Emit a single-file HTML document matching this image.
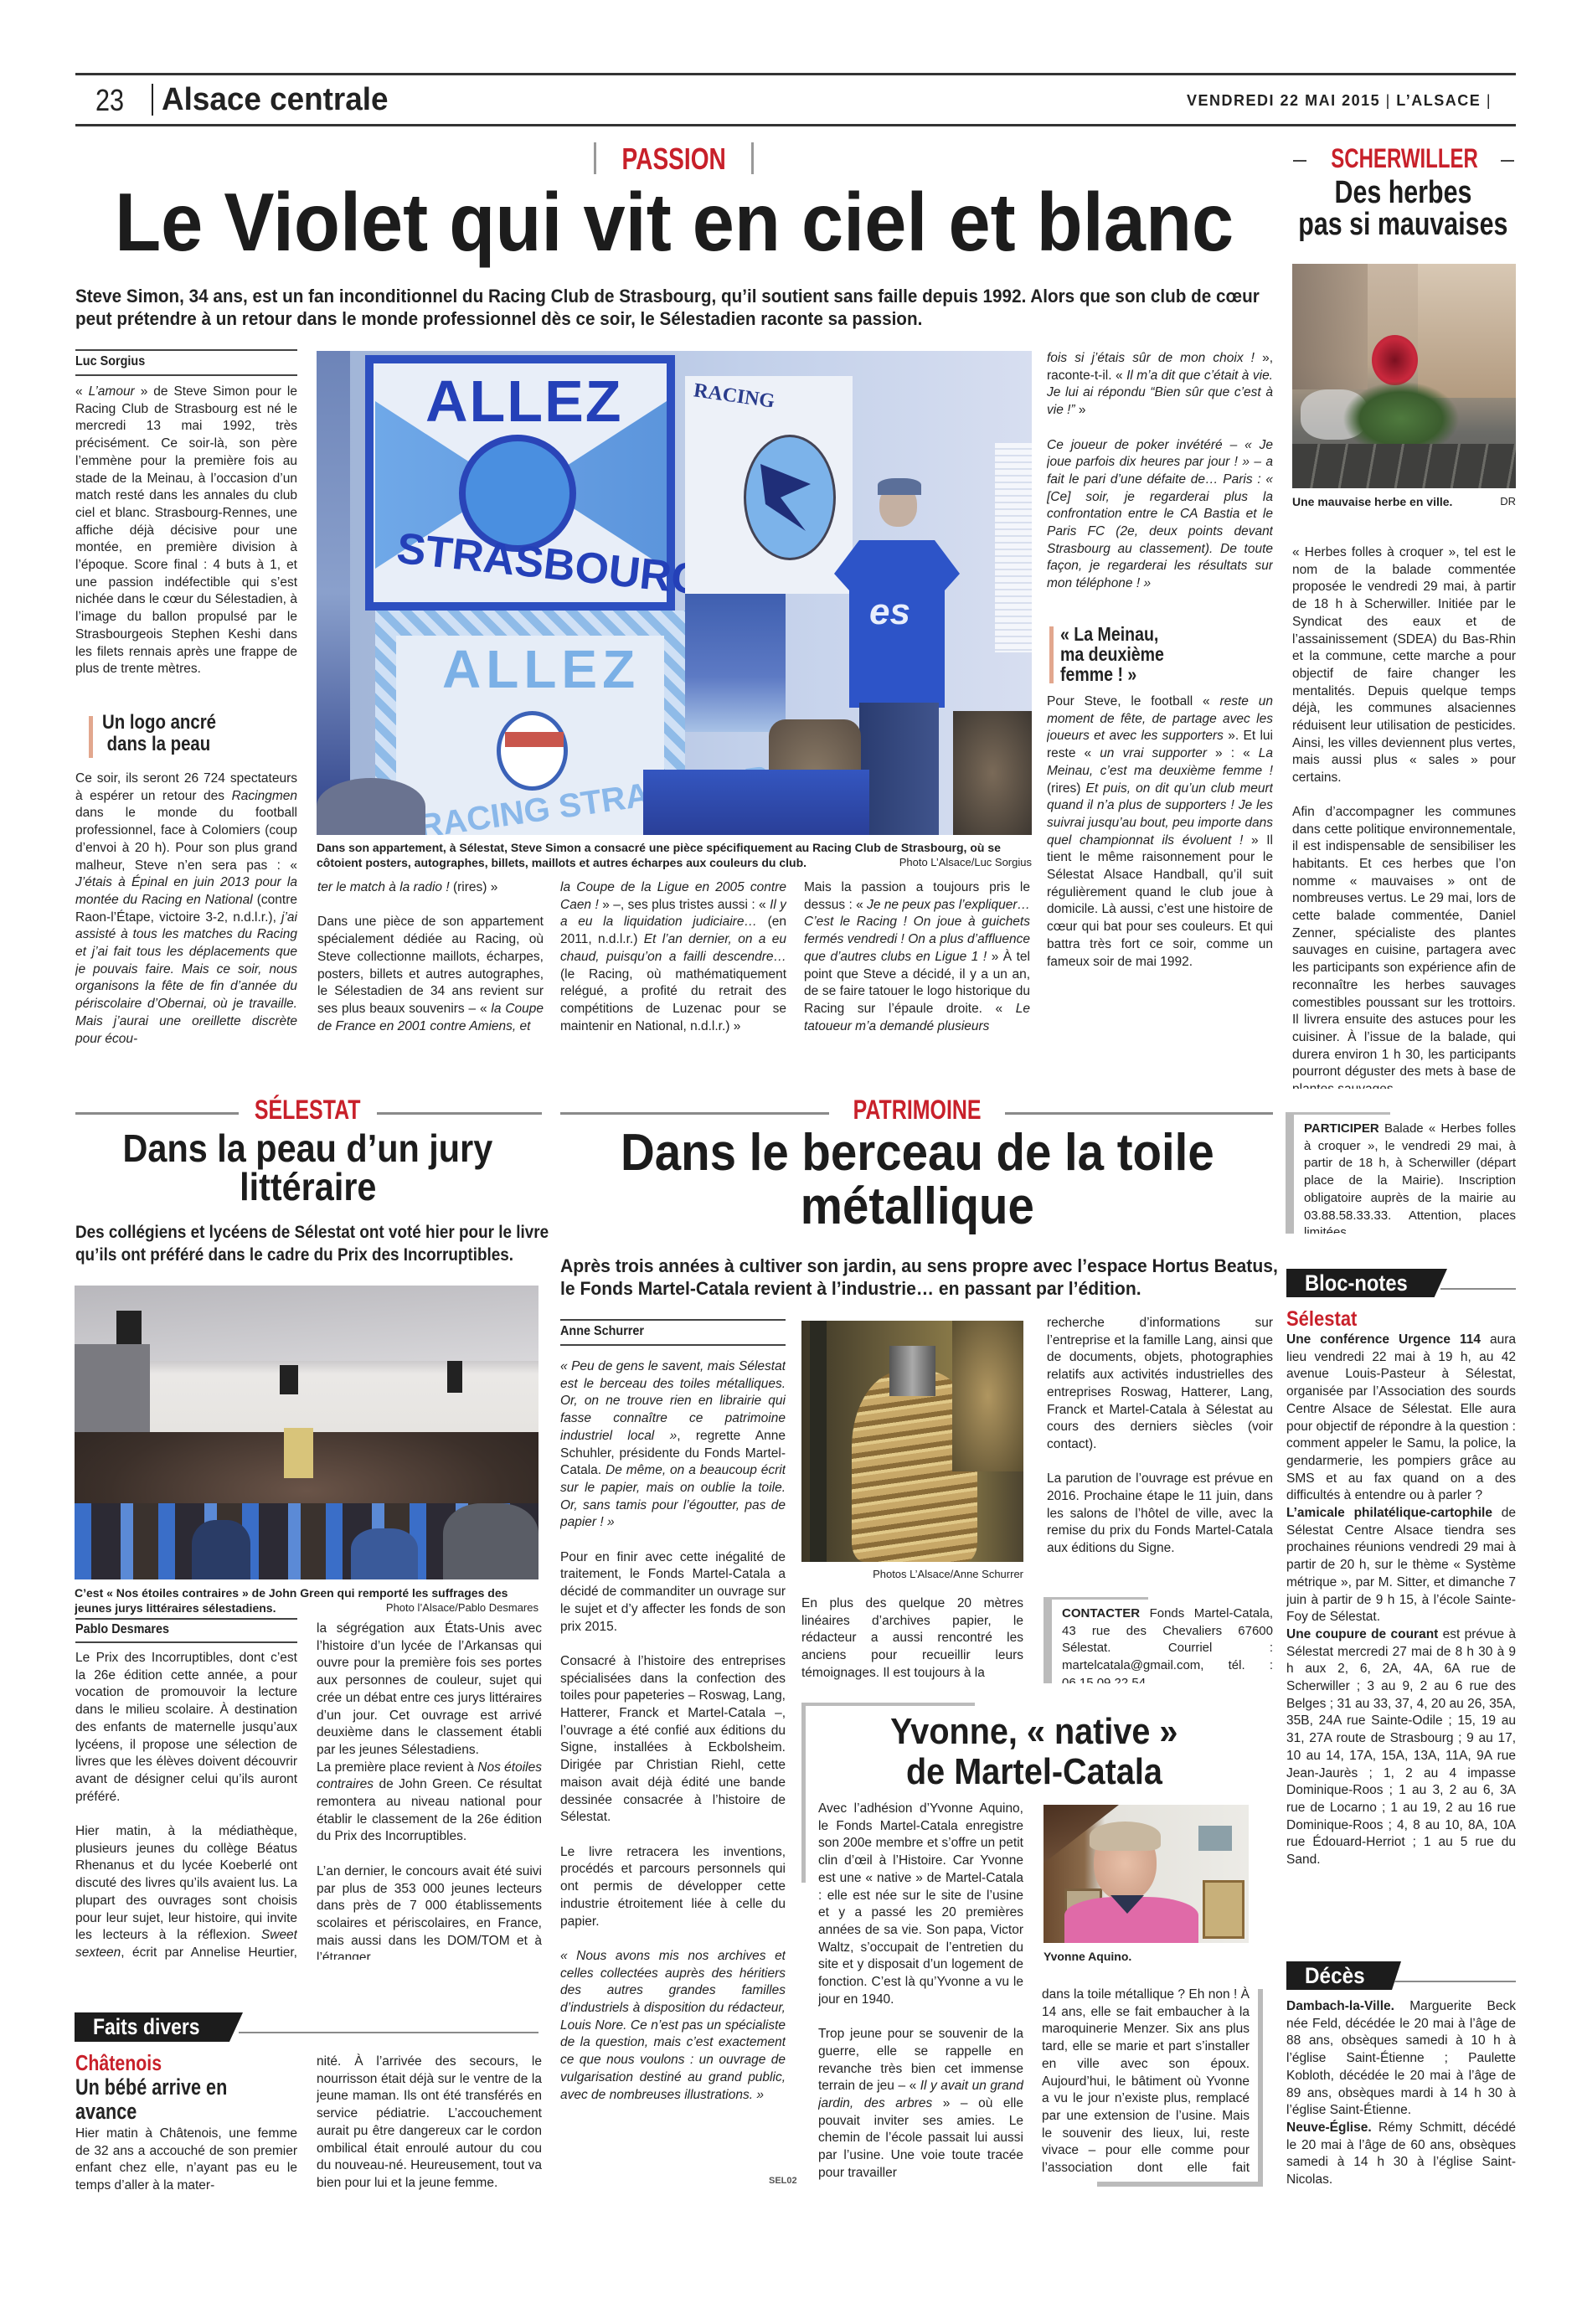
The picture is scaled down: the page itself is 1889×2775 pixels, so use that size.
<!DOCTYPE html>
<html lang="fr">
<head>
<meta charset="utf-8">
<style>
*{margin:0;padding:0;box-sizing:border-box}
body{width:1889px;height:2775px;background:#fff;position:relative;overflow:hidden;font-family:"Liberation Sans",sans-serif;color:#222}
.a{position:absolute}
.t{position:absolute;font:15.5px/20.7px "Liberation Sans",sans-serif;text-align:justify;hyphens:auto;overflow:hidden;color:#222}
.t p{margin-bottom:20px}
.t i{font-style:italic}
.h{position:absolute;white-space:nowrap;font-weight:bold;color:#1c1c1c;text-align:center}
.h span{display:inline-block;transform-origin:center}
.red{color:#c8202a}
.rule{position:absolute;background:#333}
.grule{position:absolute;background:#8a8a8a}
.cap{position:absolute;font:bold 14px/18px "Liberation Sans",sans-serif;overflow:hidden;color:#222}
.cred{font-weight:normal;float:right;font-size:13px}
.byl{position:absolute;border-top:2px solid #444;border-bottom:2px solid #444;font:bold 16px/26px "Liberation Sans",sans-serif;padding-left:0}
.box{position:absolute;border-left:10px solid #bbb;border-top:3px solid #bbb;padding:10px 0 0 12px;font:15px/20.7px "Liberation Sans",sans-serif;text-align:justify;overflow:hidden}
.blk{position:absolute;background:#1c1c1c;color:#fff;font:bold 27px/34px "Liberation Sans",sans-serif;padding-left:22px;clip-path:polygon(0 0,100% 0,92% 100%,0 100%)}
</style>
</head>
<body>

<!-- HEADER -->
<div class="rule" style="left:90px;top:87px;width:1720px;height:3px"></div>
<div class="rule" style="left:90px;top:148px;width:1720px;height:3px"></div>
<div class="a" style="left:114px;top:98px;font:36px/44px 'Liberation Sans',sans-serif;transform:scaleX(.85);transform-origin:left">23</div>
<div class="a" style="left:181px;top:100px;width:2px;height:38px;background:#222"></div>
<div class="a" style="left:193px;top:96px;font:bold 38px/46px 'Liberation Sans',sans-serif;transform:scaleX(.97);transform-origin:left;white-space:nowrap">Alsace centrale</div>
<div class="a" style="right:108px;top:108px;font:bold 18px/24px 'Liberation Sans',sans-serif;transform:scaleX(1);transform-origin:right;white-space:nowrap;letter-spacing:1.5px">VENDREDI 22 MAI 2015 <span style="font-weight:normal">|</span> L’ALSACE <span style="font-weight:normal">|</span></div>

<!-- PASSION -->
<div class="a" style="left:709px;top:170px;width:3px;height:38px;background:#999"></div>
<div class="a" style="left:897px;top:170px;width:3px;height:38px;background:#999"></div>
<div class="h red" style="left:712px;top:170px;width:185px;font-size:36px;line-height:40px"><span style="transform:scaleX(.78)">PASSION</span></div>
<div class="h" style="left:60px;top:205px;width:1490px;font-size:98px;line-height:120px"><span style="transform:scaleX(.92)">Le Violet qui vit en ciel et blanc</span></div>

<!-- SCHERWILLER -->
<div class="a" style="left:1544px;top:191px;width:16px;height:2px;background:#444"></div>
<div class="a" style="left:1792px;top:191px;width:16px;height:2px;background:#444"></div>
<div class="h red" style="left:1560px;top:172px;width:232px;font-size:32px;line-height:34px"><span style="transform:scaleX(.75)">SCHERWILLER</span></div>
<div class="h" style="left:1540px;top:210px;width:270px;font-size:38px;line-height:40px"><span style="transform:scaleX(.8)">Des herbes</span></div>
<div class="h" style="left:1510px;top:248px;width:330px;font-size:38px;line-height:40px"><span style="transform:scaleX(.8)">pas si mauvaises</span></div>

<!-- Lead -->
<div class="a" style="left:90px;top:340px;width:1600px;font:bold 22px/27px 'Liberation Sans',sans-serif;transform:scaleX(.94);transform-origin:left;white-space:nowrap">Steve Simon, 34 ans, est un fan inconditionnel du Racing Club de Strasbourg, qu’il soutient sans faille depuis 1992. Alors que son club de cœur<br>peut prétendre à un retour dans le monde professionnel dès ce soir, le Sélestadien raconte sa passion.</div>

<!-- Right top photo -->
<div class="a" style="left:1543px;top:315px;width:267px;height:268px;overflow:hidden;background:linear-gradient(180deg,#c9b7a4 0%,#b8a48c 45%,#8e8578 62%,#6c6c68 75%,#5a5a58 100%)">
  <div class="a" style="left:0;top:0;width:90px;height:150px;background:linear-gradient(90deg,#7d6e62,#a99683);opacity:.8"></div>
  <div class="a" style="left:150px;top:0;width:117px;height:160px;background:linear-gradient(180deg,#d8c8b4,#b39b80)"></div>
  <div class="a" style="left:10px;top:150px;width:80px;height:60px;border-radius:40%;background:#d9d9d9;opacity:.7"></div>
  <div class="a" style="left:95px;top:85px;width:55px;height:60px;border-radius:50%;background:radial-gradient(#7a1020,#c8283c 60%,#b02035)"></div>
  <div class="a" style="left:60px;top:140px;width:140px;height:90px;background:radial-gradient(ellipse,#4f7a3e 0%,#3b5c2e 50%,transparent 70%)"></div>
  <div class="a" style="left:0;top:215px;width:267px;height:53px;background:repeating-linear-gradient(100deg,#3f3f3d 0 30px,#6b6b66 30px 33px)"></div>
</div>
<div class="cap" style="left:1543px;top:590px;width:267px">Une mauvaise herbe en ville.<span class="cred">DR</span></div>

<div class="t" style="left:1543px;top:650px;width:267px;height:1280px;font-size:15.5px">
<p>« Herbes folles à croquer », tel est le nom de la balade commentée proposée le vendredi 29 mai, à partir de 18 h à Scherwiller. Initiée par le Syndicat des eaux et de l’assainissement (SDEA) du Bas-Rhin et la commune, cette marche a pour objectif de faire changer les mentalités. Depuis quelque temps déjà, les communes alsaciennes réduisent leur utilisation de pesticides. Ainsi, les villes deviennent plus vertes, mais aussi plus « sales » pour certains.</p>
<p>Afin d’accompagner les communes dans cette politique environnementale, il est indispensable de sensibiliser les habitants. Et ces herbes que l’on nomme « mauvaises » ont de nombreuses vertus. Le 29 mai, lors de cette balade commentée, Daniel Zenner, spécialiste des plantes sauvages en cuisine, partagera avec les participants son expérience afin de reconnaître les herbes sauvages comestibles poussant sur les trottoirs. Il livrera ensuite des astuces pour les cuisiner. À l’issue de la balade, qui durera environ 1 h 30, les participants pourront déguster des mets à base de plantes sauvages.</p>
</div>
<div class="a" style="left:1543px;top:1300px;width:267px;height:30px;background:#fff"></div>
<div class="box" style="left:1535px;top:1328px;width:275px;height:145px;border-top:none;background:linear-gradient(#bbb,#bbb) 0 0/115px 3px no-repeat"><b>PARTICIPER</b> Balade « Herbes folles à croquer », le vendredi 29 mai, à partir de 18 h, à Scherwiller (départ place de la Mairie). Inscription obligatoire auprès de la mairie au 03.88.58.33.33. Attention, places limitées.</div>

<!-- Byline Luc Sorgius -->
<div class="byl" style="left:90px;top:417px;width:265px;height:32px"><span style="display:inline-block;transform:scaleX(.9);transform-origin:left">Luc Sorgius</span></div>

<!-- Col 1 -->
<div class="t" style="left:90px;top:458px;width:265px;height:380px">
« <i>L’amour</i> » de Steve Simon pour le Racing Club de Strasbourg est né le mercredi 13 mai 1992, très précisément. Ce soir-là, son père l’emmène pour la première fois au stade de la Meinau, à l’occasion d’un match resté dans les annales du club ciel et blanc. Strasbourg-Rennes, une affiche déjà décisive pour une montée, en première division à l’époque. Score final : 4 buts à 1, et une passion indéfectible qui s’est nichée dans le cœur du Sélestadien, à l’image du ballon propulsé par le Strasbourgeois Stephen Keshi dans les filets rennais après une frappe de plus de trente mètres.
</div>
<div class="a" style="left:106px;top:855px;width:5px;height:50px;background:#e2a78e"></div>
<div class="a" style="left:122px;top:850px;font:bold 24px/26px 'Liberation Sans',sans-serif;transform:scaleX(.85);transform-origin:left;white-space:nowrap">Un logo ancré<br>&nbsp;dans la peau</div>
<div class="t" style="left:90px;top:920px;width:265px;height:335px">
Ce soir, ils seront 26 724 spectateurs à espérer un retour des <i>Racingmen</i> dans le monde du football professionnel, face à Colomiers (coup d’envoi à 20 h). Pour son plus grand malheur, Steve n’en sera pas : « <i>J’étais à Épinal en juin 2013 pour la montée du Racing en National</i> (contre Raon-l’Étape, victoire 3-2, n.d.l.r.), <i>j’ai assisté à tous les matches du Racing et j’ai fait tous les déplacements que je pouvais faire. Mais ce soir, nous organisons la fête de fin d’année du périscolaire d’Obernai, où je travaille. Mais j’aurai une oreillette discrète pour écou-</i>
</div>

<!-- Main photo -->
<div class="a" style="left:378px;top:419px;width:854px;height:578px;overflow:hidden;background:linear-gradient(90deg,#9fb3d6 0%,#c2d0ea 60%,#d7def0 100%)">
  <div class="a" style="left:0;top:0;width:40px;height:578px;background:linear-gradient(#6d84b8,#8aa0cc 50%,#2c3f88)"></div>
  <div class="a" style="left:58px;top:5px;width:370px;height:305px;background:#e8eef8;border:10px solid #2d4fc0"></div>
  <div class="a" style="left:70px;top:60px;width:348px;height:200px;background:linear-gradient(90deg,#6fa8e8,#5c95dc);clip-path:polygon(0 0,40% 45%,60% 45%,100% 0,100% 100%,60% 55%,40% 55%,0 100%)"></div>
  <div class="a" style="left:170px;top:100px;width:140px;height:140px;border-radius:50%;background:#4a8fe0;border:8px solid #2a45b8"></div>
  <div class="a" style="left:130px;top:25px;font:bold 70px/70px 'Liberation Sans',sans-serif;color:#2440b8;letter-spacing:2px">ALLEZ</div>
  <div class="a" style="left:95px;top:225px;font:bold 52px/60px 'Liberation Sans',sans-serif;color:#2440b8;transform:rotate(6deg)">STRASBOURG</div>
  <div class="a" style="left:440px;top:30px;width:200px;height:260px;background:#edf1f8"></div>
  <div class="a" style="left:450px;top:40px;font:bold 24px/28px 'Liberation Serif',serif;color:#2a3c8c;transform:rotate(8deg)">RACING</div>
  <div class="a" style="left:510px;top:100px;width:110px;height:150px;border-radius:50%;border:3px solid #445;background:#7cb3ea"></div>
  <div class="a" style="left:530px;top:135px;width:60px;height:80px;background:#1f2e78;clip-path:polygon(0 0,100% 30%,40% 50%,90% 100%,10% 60%)"></div>
  <div class="a" style="left:70px;top:310px;width:370px;height:268px;background:repeating-linear-gradient(45deg,#cfe0f5 0 10px,#8fbbe8 10px 20px)"></div>
  <div class="a" style="left:95px;top:340px;width:320px;height:238px;background:#e6edf7"></div>
  <div class="a" style="left:150px;top:345px;font:bold 64px/70px 'Liberation Sans',sans-serif;color:#7bb0e6;letter-spacing:6px">ALLEZ</div>
  <div class="a" style="left:215px;top:430px;width:85px;height:95px;border-radius:50%;background:#fff;border:5px solid #3b62b8"></div>
  <div class="a" style="left:225px;top:455px;width:70px;height:18px;background:#c9564c"></div>
  <div class="a" style="left:120px;top:515px;font:bold 40px/44px 'Liberation Sans',sans-serif;color:#8ab8ea;transform:rotate(-8deg)">RACING STRASBOURG</div>
  <div class="a" style="left:440px;top:290px;width:120px;height:165px;background:linear-gradient(#3f5fb0,#5d7ac4 60%,#a8c2e6)"></div>
  <div class="a" style="left:810px;top:110px;width:44px;height:250px;background:repeating-linear-gradient(#f4f6fb 0 6px,#d8dfee 6px 8px)"></div>
  <div class="a" style="left:672px;top:160px;width:45px;height:50px;border-radius:45%;background:#c4b0a2"></div>
  <div class="a" style="left:670px;top:152px;width:52px;height:20px;border-radius:40% 40% 0 0;background:#5b6f99"></div>
  <div class="a" style="left:618px;top:226px;width:150px;height:200px;background:#2d54c8;clip-path:polygon(20% 0,80% 0,100% 20%,88% 30%,88% 100%,12% 100%,12% 30%,0 20%)"></div>
  <div class="a" style="left:660px;top:290px;font:bold italic 44px/44px 'Liberation Sans',sans-serif;color:#e8eefc">es</div>
  <div class="a" style="left:648px;top:420px;width:95px;height:160px;background:linear-gradient(90deg,#2a3c70,#40548c)"></div>
  <div class="a" style="left:540px;top:440px;width:110px;height:140px;background:radial-gradient(#8a7a66,#5a4e44);border-radius:20px 20px 0 0"></div>
  <div class="a" style="left:760px;top:430px;width:94px;height:148px;background:radial-gradient(#7a6a58,#3e3832)"></div>
  <div class="a" style="left:390px;top:500px;width:270px;height:78px;background:linear-gradient(#3456c0,#2a3f98)"></div>
  <div class="a" style="left:0;top:510px;width:130px;height:68px;border-radius:50% 50% 0 0;background:#6a7390"></div>
</div>
<div class="cap" style="left:378px;top:1003px;width:854px;height:40px;font-size:14px">Dans son appartement, à Sélestat, Steve Simon a consacré une pièce spécifiquement au Racing Club de Strasbourg, où se côtoient posters, autographes, billets, maillots et autres écharpes aux couleurs du club.<span class="cred">Photo L’Alsace/Luc Sorgius</span></div>

<!-- Cols below photo -->
<div class="t" style="left:379px;top:1050px;width:270px;height:205px">
<i>ter le match à la radio !</i> (rires) »<br><br>
Dans une pièce de son appartement spécialement dédiée au Racing, où Steve collectionne maillots, écharpes, posters, billets et autres autographes, le Sélestadien de 34 ans revient sur ses plus beaux souvenirs – « <i>la Coupe de France en 2001 contre Amiens, et</i>
</div>
<div class="t" style="left:669px;top:1050px;width:270px;height:205px">
<i>la Coupe de la Ligue en 2005 contre Caen !</i> » –, ses plus tristes aussi : « <i>Il y a eu la liquidation judiciaire…</i> (en 2011, n.d.l.r.) <i>Et l’an dernier, on a eu chaud, puisqu’on a failli descendre…</i> (le Racing, où mathématiquement relégué, a profité du retrait des compétitions de Luzenac pour se maintenir en National, n.d.l.r.) »
</div>
<div class="t" style="left:960px;top:1050px;width:270px;height:205px">
Mais la passion a toujours pris le dessus : « <i>Je ne peux pas l’expliquer… C’est le Racing ! On joue à guichets fermés vendredi ! On a plus d’affluence que d’autres clubs en Ligue 1 !</i> » À tel point que Steve a décidé, il y a un an, de se faire tatouer le logo historique du Racing sur l’épaule droite. « <i>Le tatoueur m’a demandé plusieurs</i>
</div>
<div class="t" style="left:1250px;top:418px;width:270px;height:318px">
<i>fois si j’étais sûr de mon choix !</i> », raconte-t-il. « <i>Il m’a dit que c’était à vie. Je lui ai répondu “Bien sûr que c’est à vie !”</i> »<br><br>
<i>Ce joueur de poker invétéré – « Je joue parfois dix heures par jour ! » – a fait le pari d’une défaite de… Paris : « [Ce] soir, je regarderai plus la confrontation entre le CA Bastia et le Paris FC (2e, deux points devant Strasbourg au classement). De toute façon, je regarderai les résultats sur mon téléphone ! »</i>
</div>
<div class="a" style="left:1253px;top:748px;width:5px;height:68px;background:#e2a78e"></div>
<div class="a" style="left:1266px;top:745px;font:bold 23px/24px 'Liberation Sans',sans-serif;transform:scaleX(.85);transform-origin:left;white-space:nowrap">« La Meinau,<br>ma deuxième<br>femme ! »</div>
<div class="t" style="left:1250px;top:828px;width:270px;height:427px">
Pour Steve, le football « <i>reste un moment de fête, de partage avec les joueurs et avec les supporters</i> ». Et lui reste « <i>un vrai supporter</i> » : « <i>La Meinau, c’est ma deuxième femme !</i> (rires) <i>Et puis, on dit qu’un club meurt quand il n’a plus de supporters ! Je les suivrai jusqu’au bout, peu importe dans quel championnat ils évoluent !</i> » Il tient le même raisonnement pour le Sélestat Alsace Handball, qu’il suit régulièrement quand le club joue à domicile. Là aussi, c’est une histoire de cœur qui bat pour ses couleurs. Et qui battra très fort ce soir, comme un fameux soir de mai 1992.
</div>

<!-- SECTION 2 labels -->
<div class="grule" style="left:90px;top:1328px;width:195px;height:3px"></div>
<div class="grule" style="left:450px;top:1328px;width:197px;height:3px"></div>
<div class="h red" style="left:285px;top:1310px;width:165px;font-size:32px;line-height:30px"><span style="transform:scaleX(.78)">SÉLESTAT</span></div>
<div class="grule" style="left:669px;top:1328px;width:321px;height:3px"></div>
<div class="grule" style="left:1200px;top:1328px;width:320px;height:3px"></div>
<div class="h red" style="left:990px;top:1310px;width:210px;font-size:32px;line-height:30px"><span style="transform:scaleX(.78)">PATRIMOINE</span></div>

<div class="h" style="left:40px;top:1348px;width:655px;font-size:46px;line-height:46px"><span style="transform:scaleX(.9)">Dans la peau d’un jury</span></div>
<div class="h" style="left:40px;top:1394px;width:655px;font-size:46px;line-height:46px"><span style="transform:scaleX(.9)">littéraire</span></div>
<div class="a" style="left:90px;top:1458px;width:1000px;font:bold 21px/27px 'Liberation Sans',sans-serif;transform:scaleX(.9);transform-origin:left;white-space:nowrap">Des collégiens et lycéens de Sélestat ont voté hier pour le livre<br>qu’ils ont préféré dans le cadre du Prix des Incorruptibles.</div>

<div class="h" style="left:600px;top:1346px;width:990px;font-size:62px;line-height:62px"><span style="transform:scaleX(.91)">Dans le berceau de la toile</span></div>
<div class="h" style="left:600px;top:1410px;width:990px;font-size:62px;line-height:62px"><span style="transform:scaleX(.91)">métallique</span></div>
<div class="a" style="left:669px;top:1498px;width:1300px;font:bold 22px/27px 'Liberation Sans',sans-serif;transform:scaleX(.96);transform-origin:left;white-space:nowrap">Après trois années à cultiver son jardin, au sens propre avec l’espace Hortus Beatus,<br>le Fonds Martel-Catala revient à l’industrie… en passant par l’édition.</div>

<!-- Student photo -->
<div class="a" style="left:89px;top:1535px;width:554px;height:351px;overflow:hidden;background:linear-gradient(180deg,#d4d3d6 0%,#c8c6c8 25%,#eae8e6 30%,#e5e3df 55%,#8a7a70 60%,#3a302c 100%)">
  <div class="a" style="left:0;top:0;width:554px;height:90px;background:linear-gradient(175deg,#b8b7bc,#d8d7da)"></div>
  <div class="a" style="left:50px;top:30px;width:30px;height:45px;background:#222"></div>
  <div class="a" style="left:0;top:70px;width:90px;height:180px;background:#7a7a80"></div>
  <div class="a" style="left:245px;top:95px;width:22px;height:35px;background:#222"></div>
  <div class="a" style="left:445px;top:90px;width:18px;height:38px;background:#222"></div>
  <div class="a" style="left:0;top:175px;width:554px;height:176px;background:radial-gradient(ellipse at 50% 40%,#6a5448,#3c302a 60%,#2a2320)"></div>
  <div class="a" style="left:250px;top:170px;width:35px;height:60px;background:#d8c47a"></div>
  <div class="a" style="left:0;top:260px;width:554px;height:91px;background:repeating-linear-gradient(90deg,#3a6ec8 0 20px,#2c2a34 20px 55px,#5b8ad6 55px 70px,#3a322e 70px 100px)"></div>
  <div class="a" style="left:140px;top:280px;width:70px;height:71px;border-radius:40% 40% 0 0;background:#2a3c66"></div>
  <div class="a" style="left:330px;top:290px;width:80px;height:61px;border-radius:40% 40% 0 0;background:#3a5a9a"></div>
  <div class="a" style="left:440px;top:260px;width:114px;height:91px;border-radius:40% 40% 0 0;background:#5a5d66"></div>
</div>
<div class="cap" style="left:89px;top:1893px;width:554px;height:38px;font-size:14px">C’est « Nos étoiles contraires » de John Green qui remporté les suffrages des jeunes jurys littéraires sélestadiens.<span class="cred">Photo l’Alsace/Pablo Desmares</span></div>

<div class="byl" style="left:90px;top:1932px;width:265px;height:30px;line-height:24px"><span style="display:inline-block;transform:scaleX(.9);transform-origin:left">Pablo Desmares</span></div>
<div class="t" style="left:90px;top:1970px;width:265px;height:370px">
Le Prix des Incorruptibles, dont c’est la 26e édition cette année, a pour vocation de promouvoir la lecture dans le milieu scolaire. À destination des enfants de maternelle jusqu’aux lycéens, il propose une sélection de livres que les élèves doivent découvrir avant de désigner celui qu’ils auront préféré.<br><br>
Hier matin, à la médiathèque, plusieurs jeunes du collège Béatus Rhenanus et du lycée Koeberlé ont discuté des livres qu’ils avaient lus. La plupart des ouvrages sont choisis pour leur sujet, leur histoire, qui invite les lecteurs à la réflexion. <i>Sweet sexteen</i>, écrit par Annelise Heurtier, aborde le sujet de
</div>
<div class="t" style="left:378px;top:1935px;width:269px;height:405px">
la ségrégation aux États-Unis avec l’histoire d’un lycée de l’Arkansas qui ouvre pour la première fois ses portes aux personnes de couleur, sujet qui crée un débat entre ces jurys littéraires d’un jour. Cet ouvrage est arrivé deuxième dans le classement établi par les jeunes Sélestadiens.<br>La première place revient à <i>Nos étoiles contraires</i> de John Green. Ce résultat remontera au niveau national pour établir le classement de la 26e édition du Prix des Incorruptibles.<br><br>
L’an dernier, le concours avait été suivi par plus de 353 000 jeunes lecteurs dans près de 7 000 établissements scolaires et périscolaires, en France, mais aussi dans les DOM/TOM et à l’étranger.
</div>

<!-- Faits divers -->
<div class="blk" style="left:89px;top:2403px;width:201px;height:35px"><span style="display:inline-block;transform:scaleX(.85);transform-origin:left">Faits divers</span></div>
<div class="grule" style="left:285px;top:2426px;width:358px;height:2px"></div>
<div class="a red" style="left:90px;top:2448px;font:bold 26px/30px 'Liberation Sans',sans-serif;transform:scaleX(.82);transform-origin:left">Châtenois</div>
<div class="a" style="left:90px;top:2478px;width:330px;font:bold 27px/29px 'Liberation Sans',sans-serif;transform:scaleX(.8);transform-origin:left">Un bébé arrive en<br>avance</div>
<div class="t" style="left:90px;top:2538px;width:265px;height:84px">Hier matin à Châtenois, une femme de 32 ans a accouché de son premier enfant chez elle, n’ayant pas eu le temps d’aller à la mater-</div>
<div class="t" style="left:378px;top:2452px;width:269px;height:168px">nité. À l’arrivée des secours, le nourrisson était déjà sur le ventre de la jeune maman. Ils ont été transférés en service pédiatrie. L’accouchement aurait pu être dangereux car le cordon ombilical était enroulé autour du cou du nouveau-né. Heureusement, tout va bien pour lui et la jeune femme.</div>

<!-- Patrimoine cols -->
<div class="byl" style="left:669px;top:1575px;width:269px;height:32px"><span style="display:inline-block;transform:scaleX(.9);transform-origin:left">Anne Schurrer</span></div>
<div class="t" style="left:669px;top:1622px;width:269px;height:995px">
<i>« Peu de gens le savent, mais Sélestat est le berceau des toiles métalliques. Or, on ne trouve rien en librairie qui fasse connaître ce patrimoine industriel local »</i>, regrette Anne Schuhler, présidente du Fonds Martel-Catala. <i>De même, on a beaucoup écrit sur le papier, mais on oublie la toile. Or, sans tamis pour l’égoutter, pas de papier ! »</i><br><br>
Pour en finir avec cette inégalité de traitement, le Fonds Martel-Catala a décidé de commanditer un ouvrage sur le sujet et d’y affecter les fonds de son prix 2015.<br><br>
Consacré à l’histoire des entreprises spécialisées dans la confection des toiles pour papeteries – Roswag, Lang, Hatterer, Franck et Martel-Catala –, l’ouvrage a été confié aux éditions du Signe, installées à Eckbolsheim. Dirigée par Christian Riehl, cette maison avait déjà édité une bande dessinée consacrée à l’histoire de Sélestat.<br><br>
Le livre retracera les inventions, procédés et parcours personnels qui ont permis de développer cette industrie étroitement liée à celle du papier.<br><br>
<i>« Nous avons mis nos archives et celles collectées auprès des héritiers des autres grandes familles d’industriels à disposition du rédacteur, Louis Nore. Ce n’est pas un spécialiste de la question, mais c’est exactement ce que nous voulons : un ouvrage de vulgarisation destiné au grand public, avec de nombreuses illustrations. »</i>
</div>

<!-- Wire photo -->
<div class="a" style="left:957px;top:1577px;width:265px;height:288px;overflow:hidden;background:linear-gradient(90deg,#3c3626,#6a5e3c 40%,#8a7a48 70%,#4c4430)">
  <div class="a" style="left:10px;top:0;width:20px;height:288px;background:#2a2a22"></div>
  <div class="a" style="left:60px;top:60px;width:150px;height:228px;border-radius:40% 40% 10% 10%;background:repeating-linear-gradient(172deg,#c8a868 0 8px,#8a6c38 8px 14px,#e0c888 14px 18px)"></div>
  <div class="a" style="left:105px;top:30px;width:55px;height:60px;background:linear-gradient(90deg,#555,#aaa,#555)"></div>
  <div class="a" style="left:180px;top:0;width:85px;height:180px;background:radial-gradient(#b09660,#5a4e30)"></div>
</div>
<div class="a" style="left:957px;top:1872px;width:265px;text-align:right;font:13px/16px 'Liberation Sans',sans-serif">Photos L’Alsace/Anne Schurrer</div>
<div class="t" style="left:957px;top:1905px;width:265px;height:105px">En plus des quelque 20 mètres linéaires d’archives papier, le rédacteur a aussi rencontré les anciens pour recueillir leurs témoignages. Il est toujours à la</div>

<div class="t" style="left:1250px;top:1570px;width:270px;height:315px">
recherche d’informations sur l’entreprise et la famille Lang, ainsi que de documents, objets, photographies relatifs aux activités industrielles des entreprises Roswag, Hatterer, Lang, Franck et Martel-Catala à Sélestat au cours des derniers siècles (voir contact).<br><br>
La parution de l’ouvrage est prévue en 2016. Prochaine étape le 11 juin, dans les salons de l’hôtel de ville, avec la remise du prix du Fonds Martel-Catala aux éditions du Signe.
</div>
<div class="box" style="left:1246px;top:1907px;width:274px;height:103px;border-top:none;background:linear-gradient(#bbb,#bbb) 0 0/115px 3px no-repeat"><b>CONTACTER</b> Fonds Martel-Catala, 43 rue des Chevaliers 67600 Sélestat. Courriel : martelcatala@gmail.com, tél. : 06.15.09.22.54.</div>

<!-- Yvonne box -->
<div class="a" style="left:957px;top:2033px;width:207px;height:4px;background:#bbb"></div>
<div class="a" style="left:957px;top:2033px;width:5px;height:215px;background:#bbb"></div>
<div class="a" style="left:1502px;top:2375px;width:6px;height:236px;background:#bbb"></div>
<div class="a" style="left:1310px;top:2605px;width:198px;height:6px;background:#bbb"></div>
<div class="h" style="left:970px;top:2044px;width:530px;font-size:44px;line-height:48px"><span style="transform:scaleX(.9)">Yvonne, « native »</span></div>
<div class="h" style="left:970px;top:2092px;width:530px;font-size:44px;line-height:48px"><span style="transform:scaleX(.9)">de Martel-Catala</span></div>
<div class="t" style="left:977px;top:2150px;width:245px;height:460px">
Avec l’adhésion d’Yvonne Aquino, le Fonds Martel-Catala enregistre son 200e membre et s’offre un petit clin d’œil à l’Histoire. Car Yvonne est une « native » de Martel-Catala : elle est née sur le site de l’usine et y a passé les 20 premières années de sa vie. Son papa, Victor Waltz, s’occupait de l’entretien du site et y disposait d’un logement de fonction. C’est là qu’Yvonne a vu le jour en 1940.<br><br>
Trop jeune pour se souvenir de la guerre, elle se rappelle en revanche très bien cet immense terrain de jeu – « <i>Il y avait un grand jardin, des arbres</i> » – où elle pouvait inviter ses amies. Le chemin de l’école passait lui aussi par l’usine. Une voie toute tracée pour travailler
</div>
<div class="a" style="left:1246px;top:2155px;width:245px;height:165px;overflow:hidden;background:linear-gradient(90deg,#6a4a30 0%,#8a6a4a 20%,#e4e2dc 30%,#ecebe6 100%)">
  <div class="a" style="left:0;top:0;width:90px;height:70px;background:linear-gradient(160deg,#4a3020,#7a5a40);clip-path:polygon(0 0,100% 0,0 100%)"></div>
  <div class="a" style="left:185px;top:25px;width:40px;height:30px;background:#8ca0a8"></div>
  <div class="a" style="left:25px;top:100px;width:45px;height:55px;background:#b8a88a;border:3px solid #7a6040"></div>
  <div class="a" style="left:190px;top:90px;width:50px;height:70px;background:#c8b07a;border:3px solid #8a6a3a"></div>
  <div class="a" style="left:60px;top:25px;width:75px;height:90px;border-radius:48%;background:radial-gradient(#e8c0a8,#c89880)"></div>
  <div class="a" style="left:55px;top:20px;width:85px;height:35px;border-radius:50% 50% 20% 20%;background:#c8b8a0"></div>
  <div class="a" style="left:25px;top:110px;width:160px;height:55px;border-radius:40% 40% 0 0;background:#e06aa8"></div>
  <div class="a" style="left:80px;top:108px;width:40px;height:22px;background:#2c3450;clip-path:polygon(0 0,100% 0,50% 100%)"></div>
</div>
<div class="cap" style="left:1246px;top:2327px;width:245px">Yvonne Aquino.</div>
<div class="t" style="left:1244px;top:2372px;width:248px;height:230px">dans la toile métallique ? Eh non ! À 14 ans, elle se fait embaucher à la maroquinerie Menzer. Six ans plus tard, elle se marie et part s’installer en ville avec son époux. Aujourd’hui, le bâtiment où Yvonne a vu le jour n’existe plus, remplacé par une extension de l’usine. Mais le souvenir des lieux, lui, reste vivace – pour elle comme pour l’association dont elle fait désormais partie.</div>

<!-- Bloc-notes -->
<div class="blk" style="left:1536px;top:1515px;width:192px;height:34px"><span style="display:inline-block;transform:scaleX(.88);transform-origin:left">Bloc-notes</span></div>
<div class="grule" style="left:1720px;top:1538px;width:90px;height:2px"></div>
<div class="a red" style="left:1536px;top:1560px;font:bold 25px/30px 'Liberation Sans',sans-serif;transform:scaleX(.88);transform-origin:left">Sélestat</div>
<div class="t" style="left:1536px;top:1590px;width:274px;height:715px">
<b>Une conférence Urgence 114</b> aura lieu vendredi 22 mai à 19 h, au 42 avenue Louis-Pasteur à Sélestat, organisée par l’Association des sourds Centre Alsace de Sélestat. Elle aura pour objectif de répondre à la question : comment appeler le Samu, la police, la gendarmerie, les pompiers grâce au SMS et au fax quand on a des difficultés à entendre ou à parler ?<br>
<b>L’amicale philatélique-cartophile</b> de Sélestat Centre Alsace tiendra ses prochaines réunions vendredi 29 mai à partir de 20 h, sur le thème « Système métrique », par M. Sitter, et dimanche 7 juin à partir de 9 h 15, à l’école Sainte-Foy de Sélestat.<br>
<b>Une coupure de courant</b> est prévue à Sélestat mercredi 27 mai de 8 h 30 à 9 h aux 2, 6, 2A, 4A, 6A rue de Scherwiller ; 3 au 9, 2 au 6 rue des Belges ; 31 au 33, 37, 4, 20 au 26, 35A, 35B, 24A rue Sainte-Odile ; 15, 19 au 31, 27A route de Strasbourg ; 9 au 17, 10 au 14, 17A, 15A, 13A, 11A, 9A rue Jean-Jaurès ; 1, 2 au 4 impasse Dominique-Roos ; 1 au 3, 2 au 6, 3A rue de Locarno ; 1 au 19, 2 au 16 rue Dominique-Roos ; 4, 8 au 10, 8A, 10A rue Édouard-Herriot ; 1 au 5 rue du Sand.
</div>
<div class="blk" style="left:1536px;top:2342px;width:137px;height:34px"><span style="display:inline-block;transform:scaleX(.9);transform-origin:left">Décès</span></div>
<div class="grule" style="left:1665px;top:2365px;width:145px;height:2px"></div>
<div class="t" style="left:1536px;top:2386px;width:274px;height:230px">
<b>Dambach-la-Ville.</b> Marguerite Beck née Feld, décédée le 20 mai à l’âge de 88 ans, obsèques samedi à 10 h à l’église Saint-Étienne ; Paulette Kobloth, décédée le 20 mai à l’âge de 89 ans, obsèques mardi à 14 h 30 à l’église Saint-Étienne.<br>
<b>Neuve-Église.</b> Rémy Schmitt, décédé le 20 mai à l’âge de 60 ans, obsèques samedi à 14 h 30 à l’église Saint-Nicolas.
</div>

<div class="a" style="left:918px;top:2597px;font:bold 11px/14px 'Liberation Sans',sans-serif;color:#555">SEL02</div>
</body>
</html>
